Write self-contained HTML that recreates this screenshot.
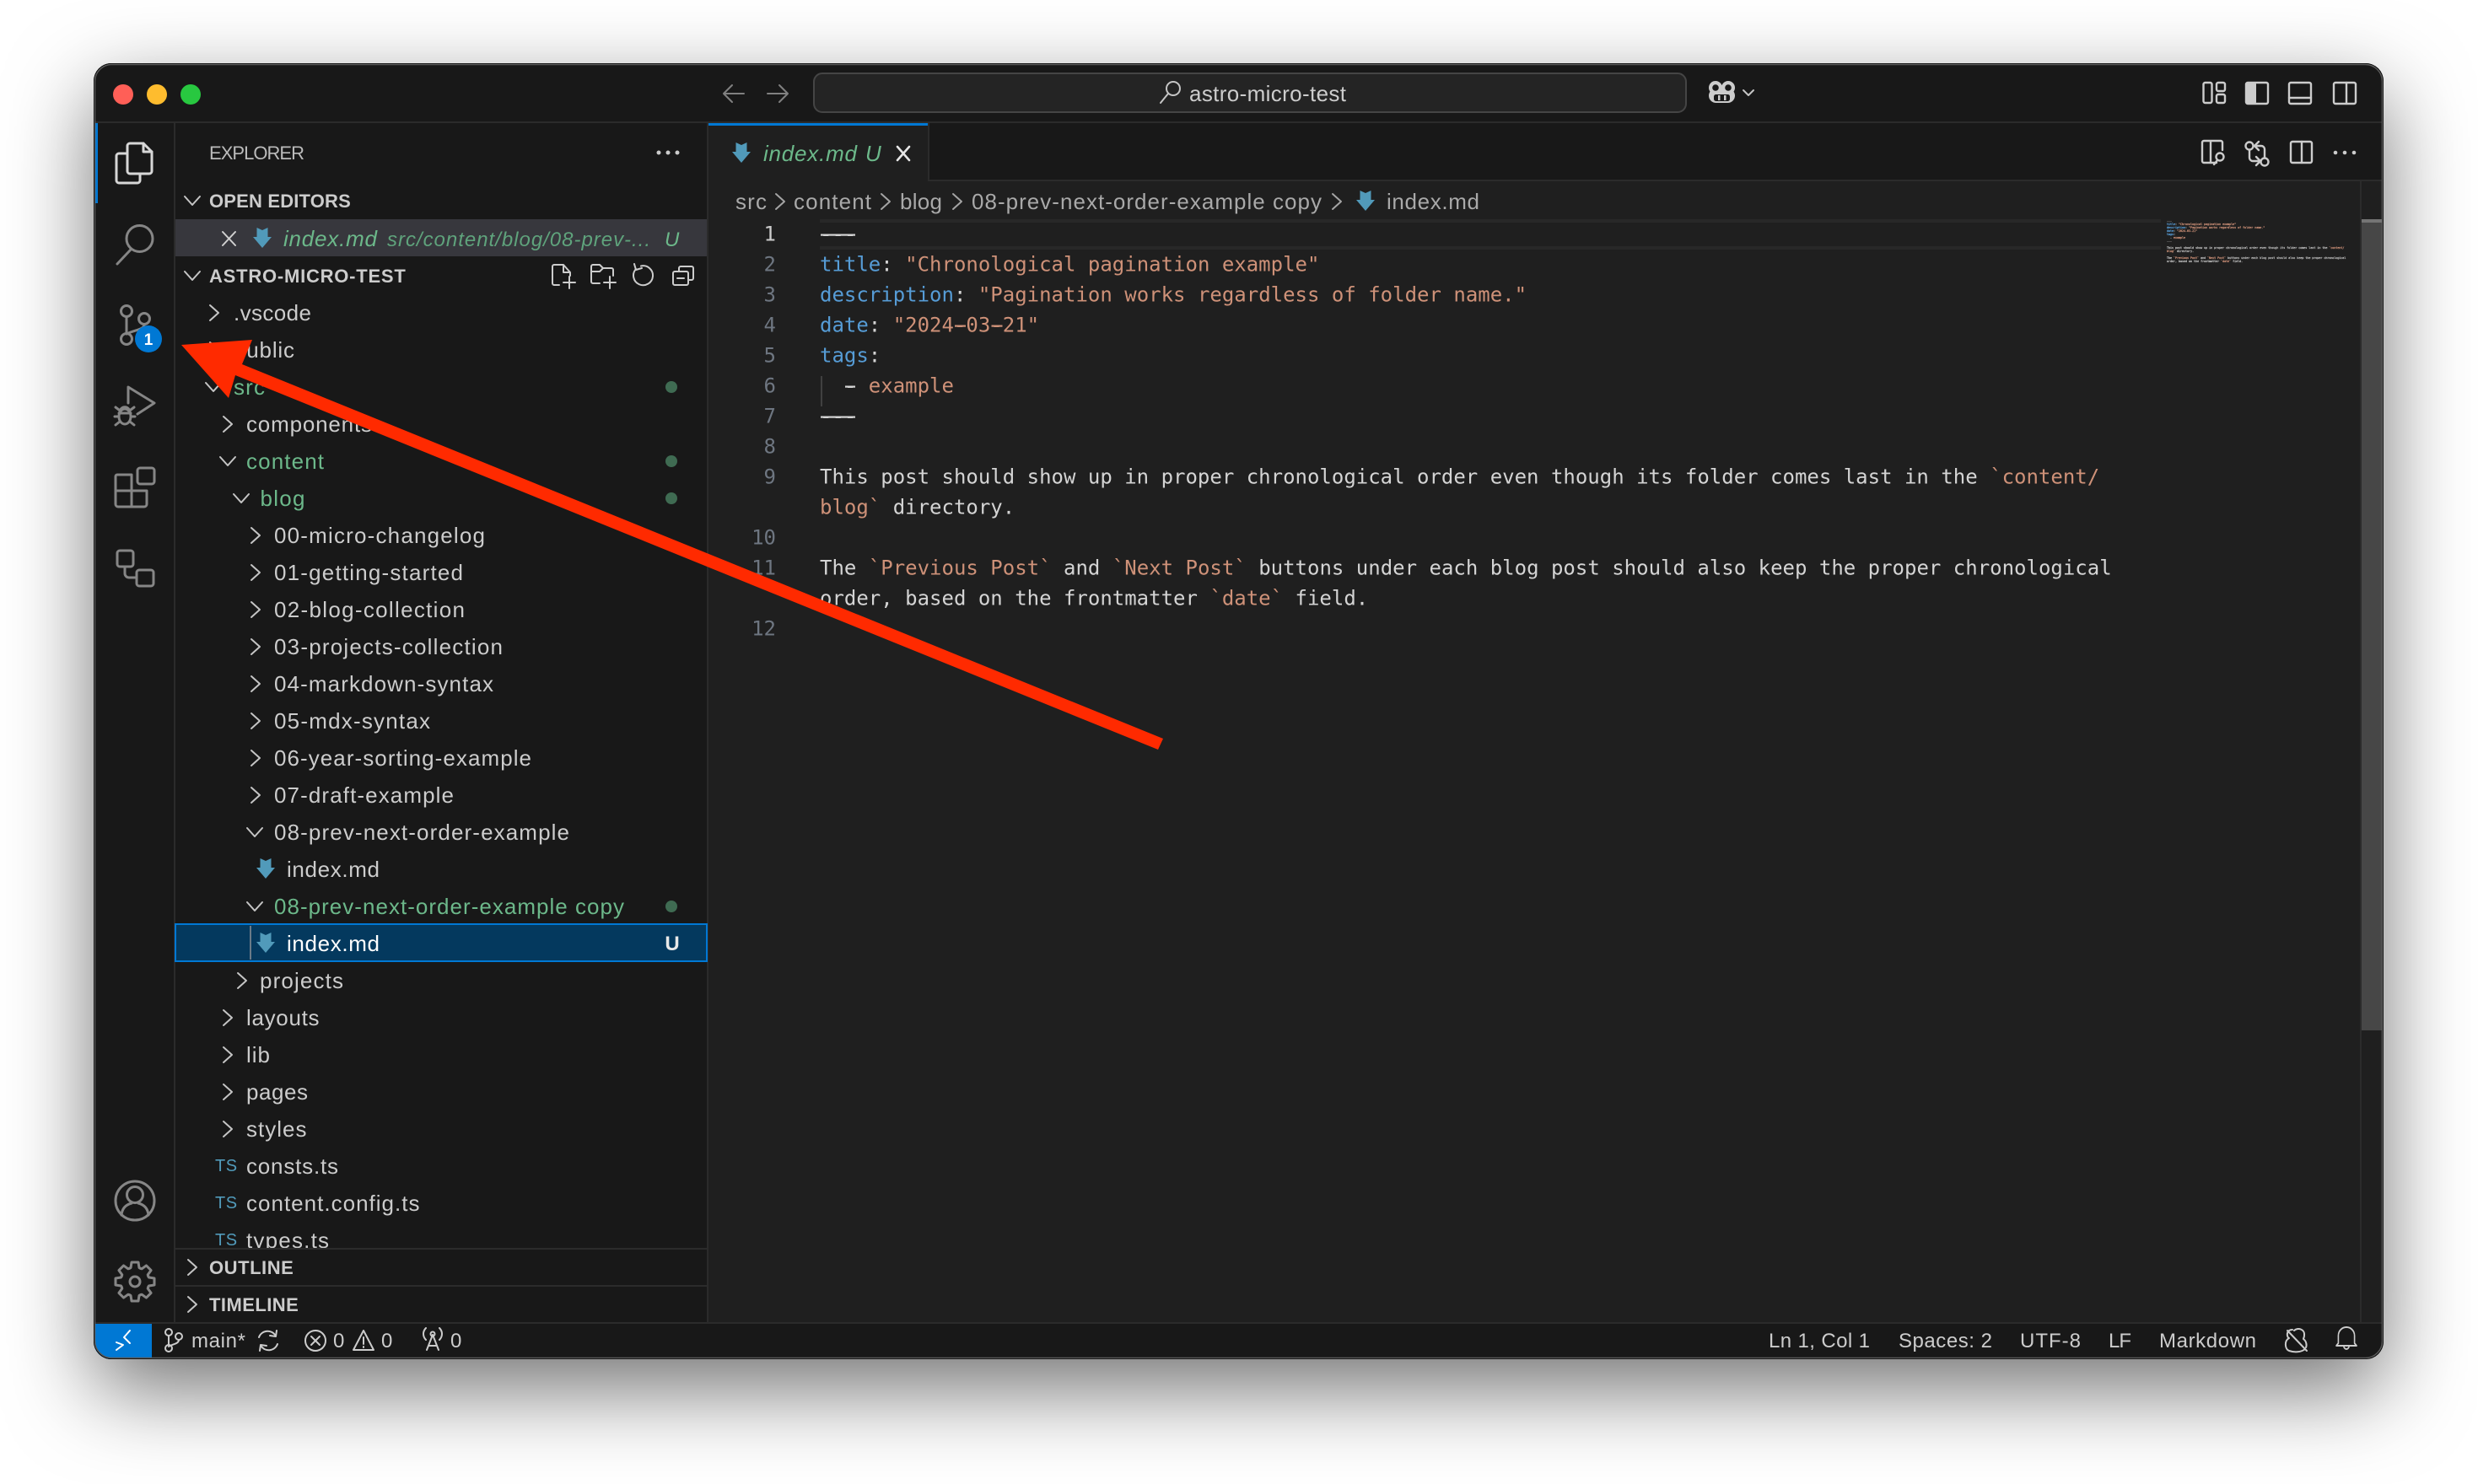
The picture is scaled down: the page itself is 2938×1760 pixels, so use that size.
<!DOCTYPE html>
<html><head><meta charset="utf-8"><title>astro-micro-test</title>
<style>
html,body{margin:0;padding:0;background:#fff;width:2938px;height:1760px;overflow:hidden}
#sh{position:absolute;left:111px;top:75px;width:2715px;height:1537px;border-radius:22px;box-shadow:0 36px 100px rgba(0,0,0,.55)}
svg{position:absolute;left:0;top:0}
text{font-family:"Liberation Sans",sans-serif;white-space:pre}
.t{font-size:26px;fill:#ccc}
.g{fill:#6cb88a}
.h{font-size:22px;font-weight:700;fill:#ccc;letter-spacing:.2px}
.m{font-family:"DejaVu Sans Mono","Liberation Mono",monospace;font-size:24px;fill:#d4d4d4}
.n{font-family:"DejaVu Sans Mono","Liberation Mono",monospace;font-size:24px;fill:#6e7681;text-anchor:end}
.k{fill:#569cd6}.s{fill:#ce9178}
.mm{font-family:"DejaVu Sans Mono","Liberation Mono",monospace;font-size:3.33px;fill:#d4d4d4;stroke:#bbb;stroke-width:.22px}
.mm .k{stroke:#569cd6}.mm .s{stroke:#ce9178}
.st{font-size:24px;fill:#ccc}
.bc{font-size:26px;fill:#a9a9a9}
.ts{font-size:20px;fill:#519aba;letter-spacing:.5px}
.i{fill:none;stroke:#c5c5c5;stroke-width:2;stroke-linecap:round;stroke-linejoin:round}
.a{fill:none;stroke:#868686;stroke-width:3;stroke-linecap:round;stroke-linejoin:round}
.w{fill:none;stroke:#ccc;stroke-width:2.4;stroke-linejoin:round;stroke-linecap:round}
</style></head><body>
<div id="sh"></div>
<svg width="2938" height="1760" viewBox="0 0 2938 1760" xmlns="http://www.w3.org/2000/svg">
<defs>
<clipPath id="win"><rect x="111" y="75" width="2715" height="1537" rx="21"/></clipPath>
<path id="md" d="M-6.500-12 0-9 6.500-12V-1H11L0 12-11-1H-6.500Z" fill="#519aba"/>
<path id="cr" d="M-5-9 5 0-5 9" class="i"/>
<path id="cd" d="M-9-5 0 5 9-5" class="i"/>
<path id="tooth" d="M15.7-6.5 16.5-5 23-4V4L16.5 5 15.7 6.5" class="a"/>
</defs>
<g clip-path="url(#win)">
<rect x="111" y="75" width="2715" height="1537" fill="#181818"/>
<!-- editor -->
<rect x="840" y="146" width="1986" height="1423" fill="#181818"/>
<rect x="840" y="215" width="1986" height="1354" fill="#1f1f1f"/>
<rect x="840" y="146" width="260" height="69" fill="#1f1f1f"/>
<rect x="840" y="146" width="260" height="3" fill="#0078d4"/>
<!-- borders -->
<rect x="111" y="144" width="2715" height="2" fill="#2b2b2b"/>
<rect x="206" y="146" width="2" height="1423" fill="#2b2b2b"/>
<rect x="838" y="146" width="2" height="1423" fill="#2b2b2b"/>
<rect x="1100" y="146" width="2" height="68" fill="#2b2b2b"/>
<rect x="1100" y="213" width="1726" height="2" fill="#2b2b2b"/>
<rect x="112" y="146" width="4" height="95" fill="#0078d4"/>

<!-- traffic -->
<circle cx="146" cy="112" r="12" fill="#ff5f57"/>
<circle cx="186" cy="112" r="12" fill="#febc2e"/>
<circle cx="226" cy="112" r="12" fill="#28c840"/>

<!-- title bar -->
<g class="i" style="stroke:#808080">
<path d="M882 111H859M868 101 858 111 868 121"/>
<path d="M910 111H933M924 101 934 111 924 121"/>
</g>
<rect x="965" y="87" width="1034" height="46" rx="10" fill="#242424" stroke="#454545" stroke-width="2"/>
<circle cx="1391" cy="105" r="8" class="i"/><path d="M1385 111 1376 122" class="i"/>
<text x="1410" y="120" class="t" textLength="186" lengthAdjust="spacing">astro-micro-test</text>
<!-- copilot -->
<g>
<rect x="2026" y="105" width="31" height="17" rx="8.500" fill="#ccc"/>
<circle cx="2034" cy="104" r="8" fill="#ccc"/><circle cx="2049" cy="104" r="8" fill="#ccc"/>
<circle cx="2034" cy="104" r="3.800" fill="#181818"/><circle cx="2049" cy="104" r="3.800" fill="#181818"/>
<rect x="2032" y="112" width="19" height="8" rx="2.500" fill="#181818"/>
<rect x="2037" y="113" width="2.500" height="6" fill="#ccc"/><rect x="2044" y="113" width="2.500" height="6" fill="#ccc"/>
</g>
<path d="M2067 107 2073 113 2079 107" class="i"/>
<!-- layout icons -->
<g class="w">
<rect x="2612.500" y="98" width="10" height="24" rx="2"/><rect x="2628" y="98" width="10" height="10" rx="2"/><rect x="2628" y="112" width="10" height="10" rx="2"/>
<rect x="2663" y="98" width="26" height="25" rx="2"/>
<rect x="2714" y="98" width="26" height="25" rx="2"/><path d="M2714 116H2740"/>
<rect x="2767" y="98" width="26" height="25" rx="2"/><path d="M2782 98V123"/>
</g>
<rect x="2663" y="98" width="12" height="25" rx="2" fill="#ccc"/>
<!-- editor actions -->
<g class="w">
<path d="M2628 193H2613a2 2 0 0 1-2-2V169a2 2 0 0 1 2-2H2633a2 2 0 0 1 2 2V178M2621 167V193"/>
<circle cx="2632" cy="186" r="4.500"/><path d="M2629 190 2625 195"/>
<circle cx="2667" cy="173" r="4.500"/><circle cx="2685" cy="192" r="4.500"/>
<path d="M2667 178V187a4 4 0 0 0 4 4H2679M2675 186 2680 191 2675 196"/>
<path d="M2685 187V177a4 4 0 0 0-4-4H2674M2678 168 2673 173 2678 178"/>
<rect x="2716" y="168" width="25" height="25" rx="2"/><path d="M2729 168V193"/>
</g>
<g fill="#ccc"><circle cx="2769" cy="181" r="2.3"/><circle cx="2780" cy="181" r="2.3"/><circle cx="2791" cy="181" r="2.3"/></g>

<!-- activity bar -->
<g class="a" style="stroke:#d7d7d7">
<path d="M154 170H170L180 180V203a3 3 0 0 1-3 3H154a3 3 0 0 1-3-3V173a3 3 0 0 1 3-3Z"/><path d="M170 170V180H180"/>
<path d="M151 182H141a3 3 0 0 0-3 3V214a3 3 0 0 0 3 3H163a3 3 0 0 0 3-3V206"/>
</g>
<g class="a">
<circle cx="165.500" cy="283" r="15.500"/><path d="M155 296 139 313"/>
<circle cx="150" cy="369" r="6.500"/><circle cx="171" cy="378" r="6.500"/><circle cx="150" cy="402" r="6.500"/>
<path d="M150 376V395M171 385C171 391 160 391 150 396"/>
<path d="M152 478V459L183 478 163 491"/>
<ellipse cx="148" cy="494" rx="7" ry="9"/><path d="M142 488C144 481 152 481 154 488M141 486 137 483M155 486 159 483M141 494H136M155 494H160M142 500 137 504M154 500 159 504M141 490H155"/>
<path d="M139 563H156V582H174V598a3 3 0 0 1-3 3H140a3 3 0 0 1-3-3V565a2 2 0 0 1 2-2ZM137 582H156V601"/>
<rect x="163" y="555" width="20" height="19" rx="3"/>
<rect x="139" y="653" width="19" height="19" rx="3"/><rect x="162" y="676" width="20" height="19" rx="3"/>
<path d="M148 672V680a5 5 0 0 0 5 5H162"/>
<circle cx="160" cy="1424" r="23"/><circle cx="160" cy="1417" r="9.500"/>
<path d="M144 1441C145 1431 152 1428 156 1427M176 1441C175 1431 168 1428 164 1427"/>
<circle cx="160" cy="1520" r="6"/>
</g>
<g transform="translate(160 1520)">
<use href="#tooth"/><use href="#tooth" transform="rotate(45)"/><use href="#tooth" transform="rotate(90)"/><use href="#tooth" transform="rotate(135)"/><use href="#tooth" transform="rotate(180)"/><use href="#tooth" transform="rotate(225)"/><use href="#tooth" transform="rotate(270)"/><use href="#tooth" transform="rotate(315)"/>
</g>
<circle cx="176" cy="402" r="16" fill="#0078d4"/>
<text x="176" y="409" font-size="19" font-weight="700" fill="#fff" text-anchor="middle">1</text>

<!-- sidebar -->
<text x="248" y="189" font-size="22" fill="#bbb" textLength="113" lengthAdjust="spacing">EXPLORER</text>
<g fill="#ccc"><circle cx="781" cy="181" r="2.500"/><circle cx="792" cy="181" r="2.500"/><circle cx="803" cy="181" r="2.500"/></g>
<use href="#cd" x="228" y="238"/>
<text x="248" y="246" class="h" textLength="168" lengthAdjust="spacing">OPEN EDITORS</text>
<rect x="208" y="260" width="630" height="44" fill="#37373d"/>
<path d="M264 275 279 291M279 275 264 291" class="i" style="stroke:#d0d0d0"/>
<use href="#md" x="311" y="282"/>
<text x="336" y="292" class="t g" font-style="italic" textLength="111" lengthAdjust="spacing">index.md</text>
<text x="459" y="292" font-size="24" font-style="italic" fill="#5fa37c" textLength="312" lengthAdjust="spacing">src/content/blog/08-prev-...</text>
<text x="788" y="292" font-size="24" font-style="italic" fill="#6cb88a">U</text>
<use href="#cd" x="228" y="327"/>
<text x="248" y="335" class="h" textLength="233" lengthAdjust="spacing">ASTRO-MICRO-TEST</text>
<g class="i" style="stroke:#ccc">
<path d="M663 338H657a2 2 0 0 1-2-2V316a2 2 0 0 1 2-2H668L676 323V327M668 314V323H676M668 335H682M675 328V342"/>
<path d="M711 336H703a2 2 0 0 1-2-2V316a2 2 0 0 1 2-2H711L715 318H725a2 2 0 0 1 2 2V327M701 322H711L715 318M716 335H730M723 328V342"/>
<path d="M754 319A11.500 11.500 0 1 0 760 315.500M752 313 754 320 761 318"/>
<path d="M805 322V318a2 2 0 0 1 2-2H820a2 2 0 0 1 2 2V330a2 2 0 0 1-2 2H816M800 322H814a2 2 0 0 1 2 2V336a2 2 0 0 1-2 2H800a2 2 0 0 1-2-2V324a2 2 0 0 1 2-2ZM803 330H811"/>
</g>

<!-- tree -->
<rect x="208" y="1096" width="630" height="44" fill="#04395e" stroke="#0078d4" stroke-width="2"/>
<rect x="296" y="1098" width="2" height="40" fill="#6a7a88"/>
<g>
<use href="#cr" x="254" y="371"/><text x="277" y="380" class="t" textLength="92" lengthAdjust="spacing">.vscode</text>
<use href="#cr" x="254" y="415"/><text x="277" y="424" class="t" textLength="72" lengthAdjust="spacing">public</text>
<use href="#cd" x="253" y="459"/><text x="277" y="468" class="t g" textLength="37" lengthAdjust="spacing">src</text>
<use href="#cr" x="270" y="503"/><text x="292" y="512" class="t" textLength="149" lengthAdjust="spacing">components</text>
<use href="#cd" x="270" y="547"/><text x="292" y="556" class="t g" textLength="92" lengthAdjust="spacing">content</text>
<use href="#cd" x="286" y="591"/><text x="308.500" y="600" class="t g" textLength="53" lengthAdjust="spacing">blog</text>
<use href="#cr" x="303" y="635"/><text x="325" y="644" class="t" textLength="250" lengthAdjust="spacing">00-micro-changelog</text>
<use href="#cr" x="303" y="679"/><text x="325" y="688" class="t" textLength="224" lengthAdjust="spacing">01-getting-started</text>
<use href="#cr" x="303" y="723"/><text x="325" y="732" class="t" textLength="226" lengthAdjust="spacing">02-blog-collection</text>
<use href="#cr" x="303" y="767"/><text x="325" y="776" class="t" textLength="271" lengthAdjust="spacing">03-projects-collection</text>
<use href="#cr" x="303" y="811"/><text x="325" y="820" class="t" textLength="260" lengthAdjust="spacing">04-markdown-syntax</text>
<use href="#cr" x="303" y="855"/><text x="325" y="864" class="t" textLength="185" lengthAdjust="spacing">05-mdx-syntax</text>
<use href="#cr" x="303" y="899"/><text x="325" y="908" class="t" textLength="305" lengthAdjust="spacing">06-year-sorting-example</text>
<use href="#cr" x="303" y="943"/><text x="325" y="952" class="t" textLength="213" lengthAdjust="spacing">07-draft-example</text>
<use href="#cd" x="302" y="987"/><text x="325" y="996" class="t" textLength="350" lengthAdjust="spacing">08-prev-next-order-example</text>
<use href="#md" x="315" y="1030"/><text x="340" y="1040" class="t" textLength="110" lengthAdjust="spacing">index.md</text>
<use href="#cd" x="302" y="1075"/><text x="325" y="1084" class="t g" textLength="415" lengthAdjust="spacing">08-prev-next-order-example copy</text>
<use href="#md" x="315" y="1118"/><text x="340" y="1128" class="t" style="fill:#fff" textLength="110" lengthAdjust="spacing">index.md</text>
<text x="797" y="1127" font-size="24" font-weight="700" fill="#e8e8e8" text-anchor="middle">U</text>
<use href="#cr" x="287" y="1163"/><text x="308" y="1172" class="t" textLength="99" lengthAdjust="spacing">projects</text>
<use href="#cr" x="270" y="1207"/><text x="292" y="1216" class="t" textLength="86.500" lengthAdjust="spacing">layouts</text>
<use href="#cr" x="270" y="1251"/><text x="292" y="1260" class="t" textLength="28" lengthAdjust="spacing">lib</text>
<use href="#cr" x="270" y="1295"/><text x="292" y="1304" class="t" textLength="73" lengthAdjust="spacing">pages</text>
<use href="#cr" x="270" y="1339"/><text x="292" y="1348" class="t" textLength="71.500" lengthAdjust="spacing">styles</text>
<text x="255" y="1389" class="ts">TS</text><text x="292" y="1392" class="t" textLength="109" lengthAdjust="spacing">consts.ts</text>
<text x="255" y="1433" class="ts">TS</text><text x="292" y="1436" class="t" textLength="205.500" lengthAdjust="spacing">content.config.ts</text>
<text x="255" y="1477" class="ts">TS</text><text x="292" y="1480" class="t" textLength="98" lengthAdjust="spacing">types.ts</text>
</g>
<g fill="#3f6b52"><circle cx="796" cy="459" r="7"/><circle cx="796" cy="547" r="7"/><circle cx="796" cy="591" r="7"/><circle cx="796" cy="1075" r="7"/></g>
<!-- lower sections -->
<rect x="208" y="1480" width="630" height="89" fill="#181818"/>
<rect x="208" y="1480" width="630" height="2" fill="#2b2b2b"/>
<rect x="208" y="1524" width="630" height="2" fill="#2b2b2b"/>
<use href="#cr" x="228" y="1503"/><text x="248" y="1511" class="h" textLength="100" lengthAdjust="spacing">OUTLINE</text>
<use href="#cr" x="228" y="1547"/><text x="248" y="1555" class="h" textLength="106" lengthAdjust="spacing">TIMELINE</text>

<!-- tab -->
<use href="#md" x="879" y="181"/>
<text x="905" y="191" class="t g" font-style="italic" textLength="111" lengthAdjust="spacing">index.md</text>
<text x="1026" y="191" class="t g" font-style="italic">U</text>
<path d="M1064 174 1078 190M1078 174 1064 190" class="i" style="stroke:#e6e6e6;stroke-width:2.6"/>

<!-- breadcrumb -->
<text x="872" y="248" class="bc" textLength="37" lengthAdjust="spacing">src</text>
<use href="#cr" x="925" y="239" style="opacity:.8"/>
<text x="941" y="248" class="bc" textLength="92" lengthAdjust="spacing">content</text>
<use href="#cr" x="1050" y="239" style="opacity:.8"/>
<text x="1067" y="248" class="bc" textLength="50" lengthAdjust="spacing">blog</text>
<use href="#cr" x="1135" y="239" style="opacity:.8"/>
<text x="1152" y="248" class="bc" textLength="415" lengthAdjust="spacing">08-prev-next-order-example copy</text>
<use href="#cr" x="1585" y="239" style="opacity:.8"/>
<use href="#md" x="1619" y="238"/>
<text x="1644" y="248" class="bc" textLength="110" lengthAdjust="spacing">index.md</text>

<!-- editor content -->
<rect x="972" y="260" width="1590" height="4" fill="#282828"/>
<rect x="972" y="292" width="1590" height="4" fill="#282828"/>
<rect x="973" y="446" width="2" height="36" fill="#404040"/>
<g transform="translate(0 .5)">
<text x="920" y="285" class="n" style="fill:#ccc">1</text>
<text x="920" y="321" class="n">2</text><text x="920" y="357" class="n">3</text><text x="920" y="393" class="n">4</text>
<text x="920" y="429" class="n">5</text><text x="920" y="465" class="n">6</text><text x="920" y="501" class="n">7</text>
<text x="920" y="537" class="n">8</text><text x="920" y="573" class="n">9</text><text x="920" y="645" class="n">10</text>
<text x="920" y="681" class="n">11</text><text x="920" y="753" class="n">12</text>

<text x="972" y="285" class="m">---</text>
<rect x="973" y="277" width="41" height="2.200" fill="#d4d4d4"/>
<text x="972" y="321" class="m"><tspan class="k">title</tspan>: <tspan class="s">"Chronological pagination example"</tspan></text>
<text x="972" y="357" class="m"><tspan class="k">description</tspan>: <tspan class="s">"Pagination works regardless of folder name."</tspan></text>
<text x="972" y="393" class="m"><tspan class="k">date</tspan>: <tspan class="s">"2024-03-21"</tspan></text>
<rect x="1132" y="385" width="13" height="2.200" fill="#ce9178"/><rect x="1175.500" y="385" width="13" height="2.200" fill="#ce9178"/>
<text x="972" y="429" class="m"><tspan class="k">tags</tspan>:</text>
<text x="972" y="465" class="m">  - <tspan class="s">example</tspan></text>
<rect x="1002" y="457" width="12" height="2.200" fill="#d4d4d4"/>
<text x="972" y="501" class="m">---</text>
<rect x="973" y="493" width="41" height="2.200" fill="#d4d4d4"/>
<text x="972" y="573" class="m">This post should show up in proper chronological order even though its folder comes last in the <tspan class="s">`content/</tspan></text>
<text x="972" y="609" class="m"><tspan class="s">blog`</tspan> directory.</text>
<text x="972" y="681" class="m">The <tspan class="s">`Previous Post`</tspan> and <tspan class="s">`Next Post`</tspan> buttons under each blog post should also keep the proper chronological</text>
<text x="972" y="717" class="m">order, based on the frontmatter <tspan class="s">`date`</tspan> field.</text>
</g>

<!-- minimap -->
<g>
<text x="2569" y="263" class="mm">---</text>
<text x="2569" y="267" class="mm"><tspan class="k">title</tspan>: <tspan class="s">"Chronological pagination example"</tspan></text>
<text x="2569" y="271" class="mm"><tspan class="k">description</tspan>: <tspan class="s">"Pagination works regardless of folder name."</tspan></text>
<text x="2569" y="275" class="mm"><tspan class="k">date</tspan>: <tspan class="s">"2024-03-21"</tspan></text>
<text x="2569" y="279" class="mm"><tspan class="k">tags</tspan>:</text>
<text x="2569" y="283" class="mm">  - <tspan class="s">example</tspan></text>
<text x="2569" y="287" class="mm">---</text>
<text x="2569" y="295" class="mm">This post should show up in proper chronological order even though its folder comes last in the <tspan class="s">`content/</tspan></text>
<text x="2569" y="299" class="mm"><tspan class="s">blog`</tspan> directory.</text>
<text x="2569" y="307" class="mm">The <tspan class="s">`Previous Post`</tspan> and <tspan class="s">`Next Post`</tspan> buttons under each blog post should also keep the proper chronological</text>
<text x="2569" y="311" class="mm">order, based on the frontmatter <tspan class="s">`date`</tspan> field.</text>
</g>
<!-- scrollbar -->
<rect x="2798" y="215" width="2" height="1354" fill="#2b2b2b"/>
<rect x="2800" y="260" width="26" height="962" fill="#474747"/>
<rect x="2800" y="260" width="26" height="4" fill="#757575"/>

<!-- status bar -->
<rect x="111" y="1568" width="2715" height="2" fill="#2b2b2b"/>
<rect x="112" y="1570" width="68" height="42" fill="#0078d4"/>
<path d="M138 1592 146 1595 138 1601M154 1578 147 1586 154 1593" fill="none" stroke="#fff" stroke-width="2" stroke-linecap="round" stroke-linejoin="round"/>
<g class="i" style="stroke:#ccc">
<circle cx="200" cy="1580" r="4"/><circle cx="200" cy="1599" r="4"/><circle cx="212" cy="1585" r="4"/>
<path d="M200 1584V1595M212 1589C212 1594 204 1594 200 1597"/>
<path d="M307 1586A11 11 0 0 1 326 1583M329 1594A11 11 0 0 1 310 1597M328 1578 327 1585 320 1584M308 1602 309 1595 316 1596"/>
<circle cx="374" cy="1590" r="12"/><path d="M369 1585 379 1595M379 1585 369 1595"/>
<path d="M431 1578 443 1601H419ZM431 1586V1594M431 1597V1598"/>
<path d="M513 1583 506 1601M513 1583 520 1601M508 1596H518"/><circle cx="513" cy="1582" r="2.500"/>
<path d="M505 1575C501 1579 501 1585 505 1589M521 1575C525 1579 525 1585 521 1589"/>
<path d="M2718 1577C2710 1577 2711 1586 2714 1587 2708 1590 2709 1600 2714 1602 2720 1604 2728 1604 2733 1600M2720 1578C2724 1574 2733 1576 2732 1584 2732 1586 2731 1587 2731 1588 2735 1591 2735 1596 2734 1598M2712 1578 2735 1602"/>
<path d="M2770 1597V1588a12 10 0 0 1 24 0V1597L2797 1600H2767ZM2778 1600a4 4 0 0 0 8 0" transform="translate(0 -4) translate(2782 0) scale(.8 1) translate(-2782 0)"/>
</g>
<text x="227" y="1598" class="st" textLength="64" lengthAdjust="spacing">main*</text>
<text x="395" y="1598" class="st">0</text>
<text x="452" y="1598" class="st">0</text>
<text x="534" y="1598" class="st">0</text>
<text x="2097" y="1598" class="st" textLength="120" lengthAdjust="spacing">Ln 1, Col 1</text>
<text x="2251" y="1598" class="st" textLength="111" lengthAdjust="spacing">Spaces: 2</text>
<text x="2395" y="1598" class="st" textLength="72" lengthAdjust="spacing">UTF-8</text>
<text x="2500" y="1598" class="st" textLength="27" lengthAdjust="spacing">LF</text>
<text x="2560" y="1598" class="st" textLength="115" lengthAdjust="spacing">Markdown</text>

<!-- arrow -->
<polygon points="215,409 299,403 287,432 1379,876 1373,889 279,445 271,472" fill="#ff2a00"/>
</g>
<rect x="111.500" y="75.500" width="2714" height="1536" rx="21" fill="none" stroke="#000" stroke-width="1"/>
<rect x="112.500" y="76.500" width="2712" height="1534" rx="20" fill="none" stroke="#5a5a5a" stroke-width="1.500"/>
</svg>
</body></html>
